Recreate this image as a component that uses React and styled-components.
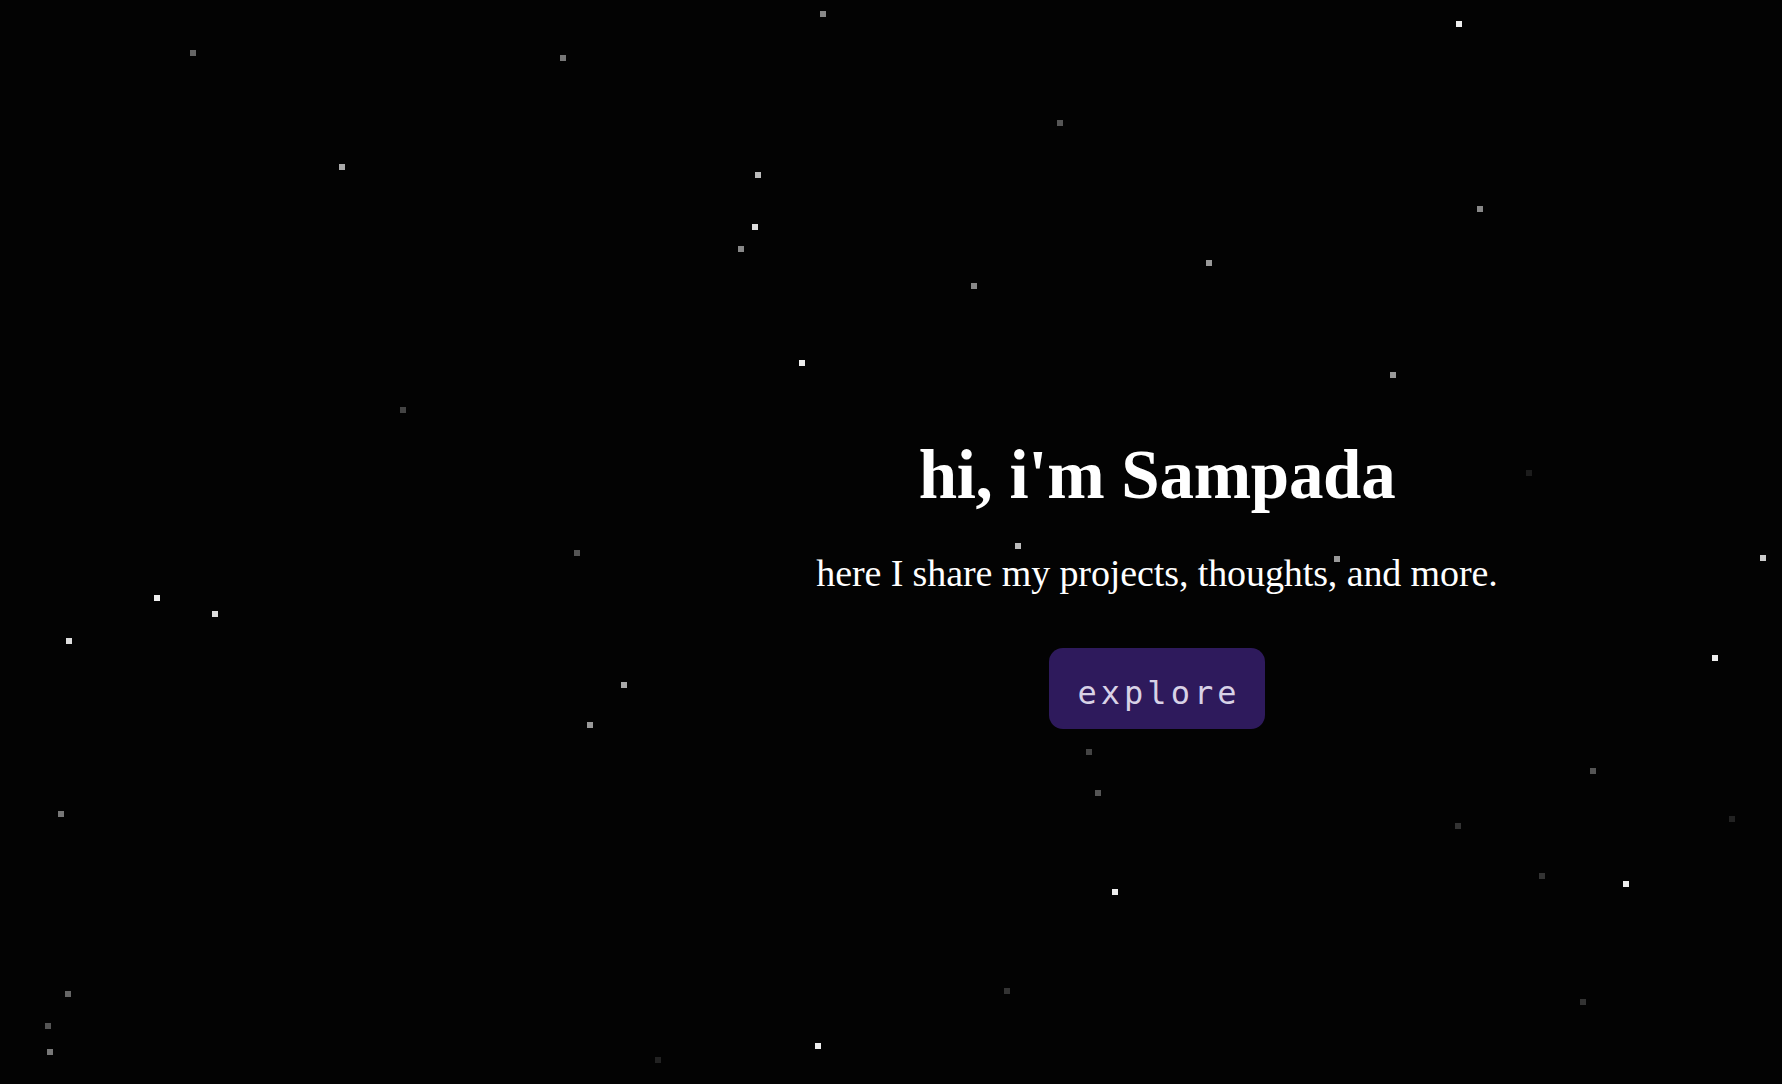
import React from "react";
import styled, { createGlobalStyle } from "styled-components";

const GlobalStyle = createGlobalStyle`
  html, body {
    margin: 0;
    padding: 0;
    background: #030303;
  }
  body {
    font-family: "Liberation Serif", "Times New Roman", serif;
    overflow: hidden;
  }
`;

// [x, y, colour] - star field, top-left of each 6px square
const STARS = [
  [820, 11, "#888"], [1456, 21, "#eee"], [190, 50, "#666"], [560, 55, "#777"],
  [1057, 120, "#555"], [339, 164, "#aaa"], [755, 172, "#bbb"], [1477, 206, "#888"],
  [752, 224, "#ddd"], [738, 246, "#888"], [1206, 260, "#999"], [971, 283, "#888"],
  [799, 360, "#eee"], [1390, 372, "#999"], [400, 407, "#444"], [1526, 470, "#1c1c1c"],
  [1015, 543, "#bbb"], [1334, 556, "#999"], [574, 550, "#555"], [1760, 555, "#ccc"],
  [154, 595, "#eee"], [212, 611, "#ddd"], [66, 638, "#ddd"], [1712, 655, "#eee"],
  [621, 682, "#aaa"], [587, 722, "#999"], [1086, 749, "#444"], [1095, 790, "#555"],
  [1590, 768, "#555"], [58, 811, "#777"], [1455, 823, "#333"], [1729, 816, "#222"],
  [1539, 873, "#333"], [1112, 889, "#eee"], [1623, 881, "#eee"], [1004, 988, "#333"],
  [65, 991, "#666"], [1580, 999, "#333"], [45, 1023, "#555"], [47, 1049, "#777"],
  [815, 1043, "#eee"], [655, 1057, "#222"],
];

const Page = styled.main`
  position: relative;
  width: 100vw;
  height: 100vh;
  overflow: hidden;
  background: #030303;
`;

const Sky = styled.div`
  position: absolute;
  inset: 0;
  pointer-events: none;
`;

const Star = styled.span`
  position: absolute;
  width: 6px;
  height: 6px;
  background: ${p => p.$color};
`;

const Hero = styled.section`
  position: relative;
  display: flex;
  flex-direction: column;
  align-items: center;
  padding: 434px 0 0 532px;
  color: #fff;
`;

const Title = styled.h1`
  margin: 0;
  font-size: 69px;
  line-height: 1.2;
  font-weight: 700;
  letter-spacing: -0.3px;
`;

const Tagline = styled.p`
  margin: 34px 0 0;
  font-size: 38px;
  line-height: 1.2;
  font-weight: 400;
  letter-spacing: -0.1px;
`;

const ExploreButton = styled.button`
  margin-top: 52px;
  width: 216px;
  height: 81px;
  border: none;
  border-radius: 14px;
  background: #2e1a5c;
  color: #d8d2e6;
  font-family: "DejaVu Sans Mono", "Liberation Mono", monospace;
  font-size: 32px;
  letter-spacing: 4px;
  padding: 8px 0 0 4px;
  cursor: pointer;
`;

export default function App() {
  return (
    <Page>
      <GlobalStyle />
      <Sky>
        {STARS.map(([x, y, c], i) => (
          <Star key={i} $color={c} style={{ left: x, top: y }} />
        ))}
      </Sky>
      <Hero>
        <Title>hi, i'm Sampada</Title>
        <Tagline>here I share my projects, thoughts, and more.</Tagline>
        <ExploreButton>explore</ExploreButton>
      </Hero>
    </Page>
  );
}
